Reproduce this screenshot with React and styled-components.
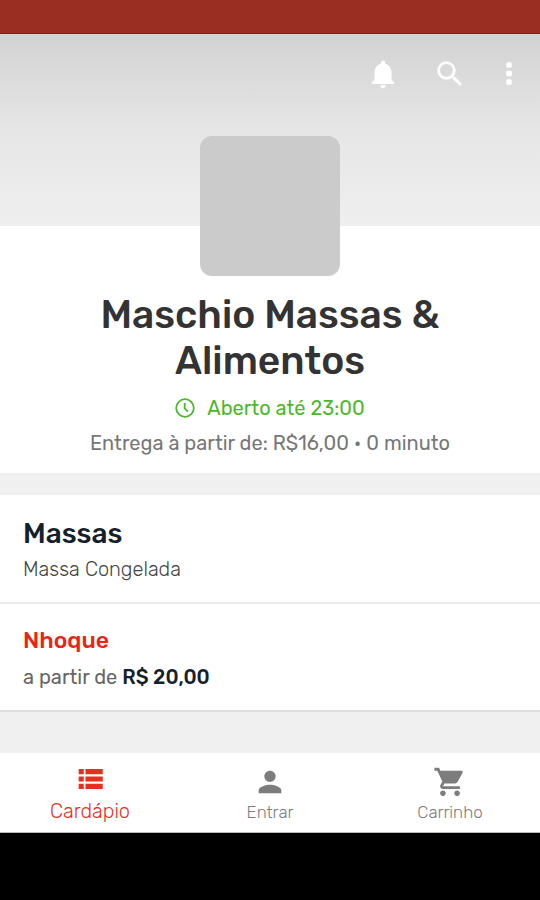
import React from "react";
import styled, {createGlobalStyle} from "styled-components";
import {MdNotifications, MdSearch, MdPerson, MdShoppingCart} from "react-icons/md";

const GlobalStyle = createGlobalStyle`
  *, *::before, *::after {
    box-sizing: border-box;
  }
  body {
    margin: 0;
    background: #000;
    color: #333;
    font-family: Rubik, Inter, Roboto, sans-serif;
  }
  h1, h2, h3, p {
    margin: 0;
  }
`;

const ClockIcon = () => (
    <svg width="20" height="20" viewBox="0 0 20 20" fill="none" stroke="currentColor" strokeWidth="1.8" aria-hidden="true">
        <circle cx="10" cy="10" r="8.8" />
        <path d="M9.7 5v5.3l3.2 3.4" />
    </svg>
);

const MoreIcon = () => (
    <svg width="34" height="34" viewBox="0 0 34 34" fill="currentColor" aria-hidden="true">
        <rect x="14.2" y="5.2" width="5.6" height="5.6" rx="1.6" />
        <rect x="14.2" y="13.7" width="5.6" height="5.6" rx="1.6" />
        <rect x="14.2" y="22.2" width="5.6" height="5.6" rx="1.6" />
    </svg>
);

const ListIcon = () => (
    <svg width="34" height="34" viewBox="0 0 24 24" fill="currentColor" aria-hidden="true">
        <path d="M4 13.8h3.6v-3.6H4zM4 19h3.6v-3.6H4zM4 8.6h3.6V5H4zM8.8 13.8H21v-3.6H8.8zM8.8 19H21v-3.6H8.8zM8.8 5v3.6H21V5z" />
    </svg>
);

const App = () => {
    return(
        <>
            <GlobalStyle />
            <Screen>
                <StatusBar />
                <Cover>
                    <Toolbar>
                        <IconButton aria-label="Notificações"><MdNotifications size={34} /></IconButton>
                        <IconButton aria-label="Buscar"><MdSearch size={34} /></IconButton>
                        <IconButton aria-label="Mais opções" $narrow><MoreIcon /></IconButton>
                    </Toolbar>
                </Cover>
                <Store>
                    <Logo />
                    <StoreName>Maschio Massas & Alimentos</StoreName>
                    <OpenUntil>
                        <ClockIcon />
                        Aberto até 23:00
                    </OpenUntil>
                    <Delivery>Entrega à partir de: R$16,00 • 0 minuto</Delivery>
                </Store>
                <Menu>
                    <Category>
                        <h2>Massas</h2>
                        <p>Massa Congelada</p>
                    </Category>
                    <Product href="#nhoque">
                        <h3>Nhoque</h3>
                        <p>a partir de <strong>R$ 20,00</strong></p>
                    </Product>
                </Menu>
                <BottomNav>
                    <Tab href="#cardapio" $active>
                        <ListIcon />
                        <span>Cardápio</span>
                    </Tab>
                    <Tab href="#entrar">
                        <MdPerson size={34} />
                        <span>Entrar</span>
                    </Tab>
                    <Tab href="#carrinho">
                        <MdShoppingCart size={34} />
                        <span>Carrinho</span>
                    </Tab>
                </BottomNav>
            </Screen>
        </>
    )
};

const Screen = styled.div`
  display: flex;
  flex-direction: column;
  background: #f0f0f0;
`;

const StatusBar = styled.div`
  height: 34px;
  background: #9a2e23;
  border-bottom: 1px solid #98101a;
`;

const Cover = styled.header`
  height: 192px;
  padding-top: 16px;
  background: linear-gradient(#d2d2d2, #e6e6e6 50%, #efefef);
`;

const Toolbar = styled.div`
  display: flex;
  justify-content: flex-end;
  padding-right: 14px;
`;

const IconButton = styled.button`
  display: flex;
  align-items: center;
  justify-content: center;
  width: ${props => props.$narrow ? "34px" : "67px"};
  height: 48px;
  margin-left: ${props => props.$narrow ? "9px" : "0"};
  padding: 0;
  border: 0;
  background: none;
  color: #fff;
`;

const Store = styled.section`
  display: flex;
  flex-direction: column;
  align-items: center;
  padding: 0 24px 18px;
  background: #fff;
  text-align: center;
`;

const Logo = styled.div`
  width: 140px;
  height: 140px;
  margin-top: -90px;
  border-radius: 12px;
  background: #cbcbcb;
`;

const StoreName = styled.h1`
  max-width: 380px;
  margin-top: 16px;
  font-size: 39px;
  line-height: 46px;
  font-weight: 500;
`;

const OpenUntil = styled.p`
  display: flex;
  align-items: center;
  gap: 12px;
  margin-top: 12px;
  color: #4cb82b;
  font-size: 20px;
  line-height: 24px;
`;

const Delivery = styled.p`
  margin-top: 11px;
  color: #777;
  font-size: 20px;
  line-height: 24px;
`;

const Menu = styled.main`
  margin: 22px 0 41px;
  background: #fff;
`;

const Category = styled.div`
  padding: 22px 23px 21px;
  border-bottom: 2px solid #ebebeb;
  h2 {
    color: #14212b;
    font-size: 28px;
    line-height: 34px;
    font-weight: 500;
  }
  p {
    margin-top: 6px;
    color: #444;
    font-size: 20px;
    line-height: 24px;
    font-weight: 350;
  }
`;

const Product = styled.a`
  display: block;
  padding: 22px 23px 21px;
  border-bottom: 2px solid #dedede;
  text-decoration: none;
  h3 {
    color: #ea2517;
    font-size: 23px;
    line-height: 28px;
    font-weight: 500;
  }
  p {
    margin-top: 11px;
    color: #666;
    font-size: 20px;
    line-height: 24px;
  }
  strong {
    color: #14212b;
    font-weight: 500;
  }
`;

const BottomNav = styled.nav`
  display: flex;
  height: 80px;
  background: #fff;
  border-bottom: 1px solid #bbb;
`;

const Tab = styled.a`
  flex: 1;
  display: flex;
  flex-direction: column;
  align-items: center;
  gap: ${props => props.$active ? "3px" : "1px"};
  padding-top: ${props => props.$active ? "9px" : "12px"};
  color: ${props => props.$active ? "#e6301f" : "#7d7d7d"};
  font-size: ${props => props.$active ? "20px" : "17px"};
  line-height: 24px;
  font-weight: 350;
  text-decoration: none;
  svg {
    flex: none;
  }
`;

export default App;
